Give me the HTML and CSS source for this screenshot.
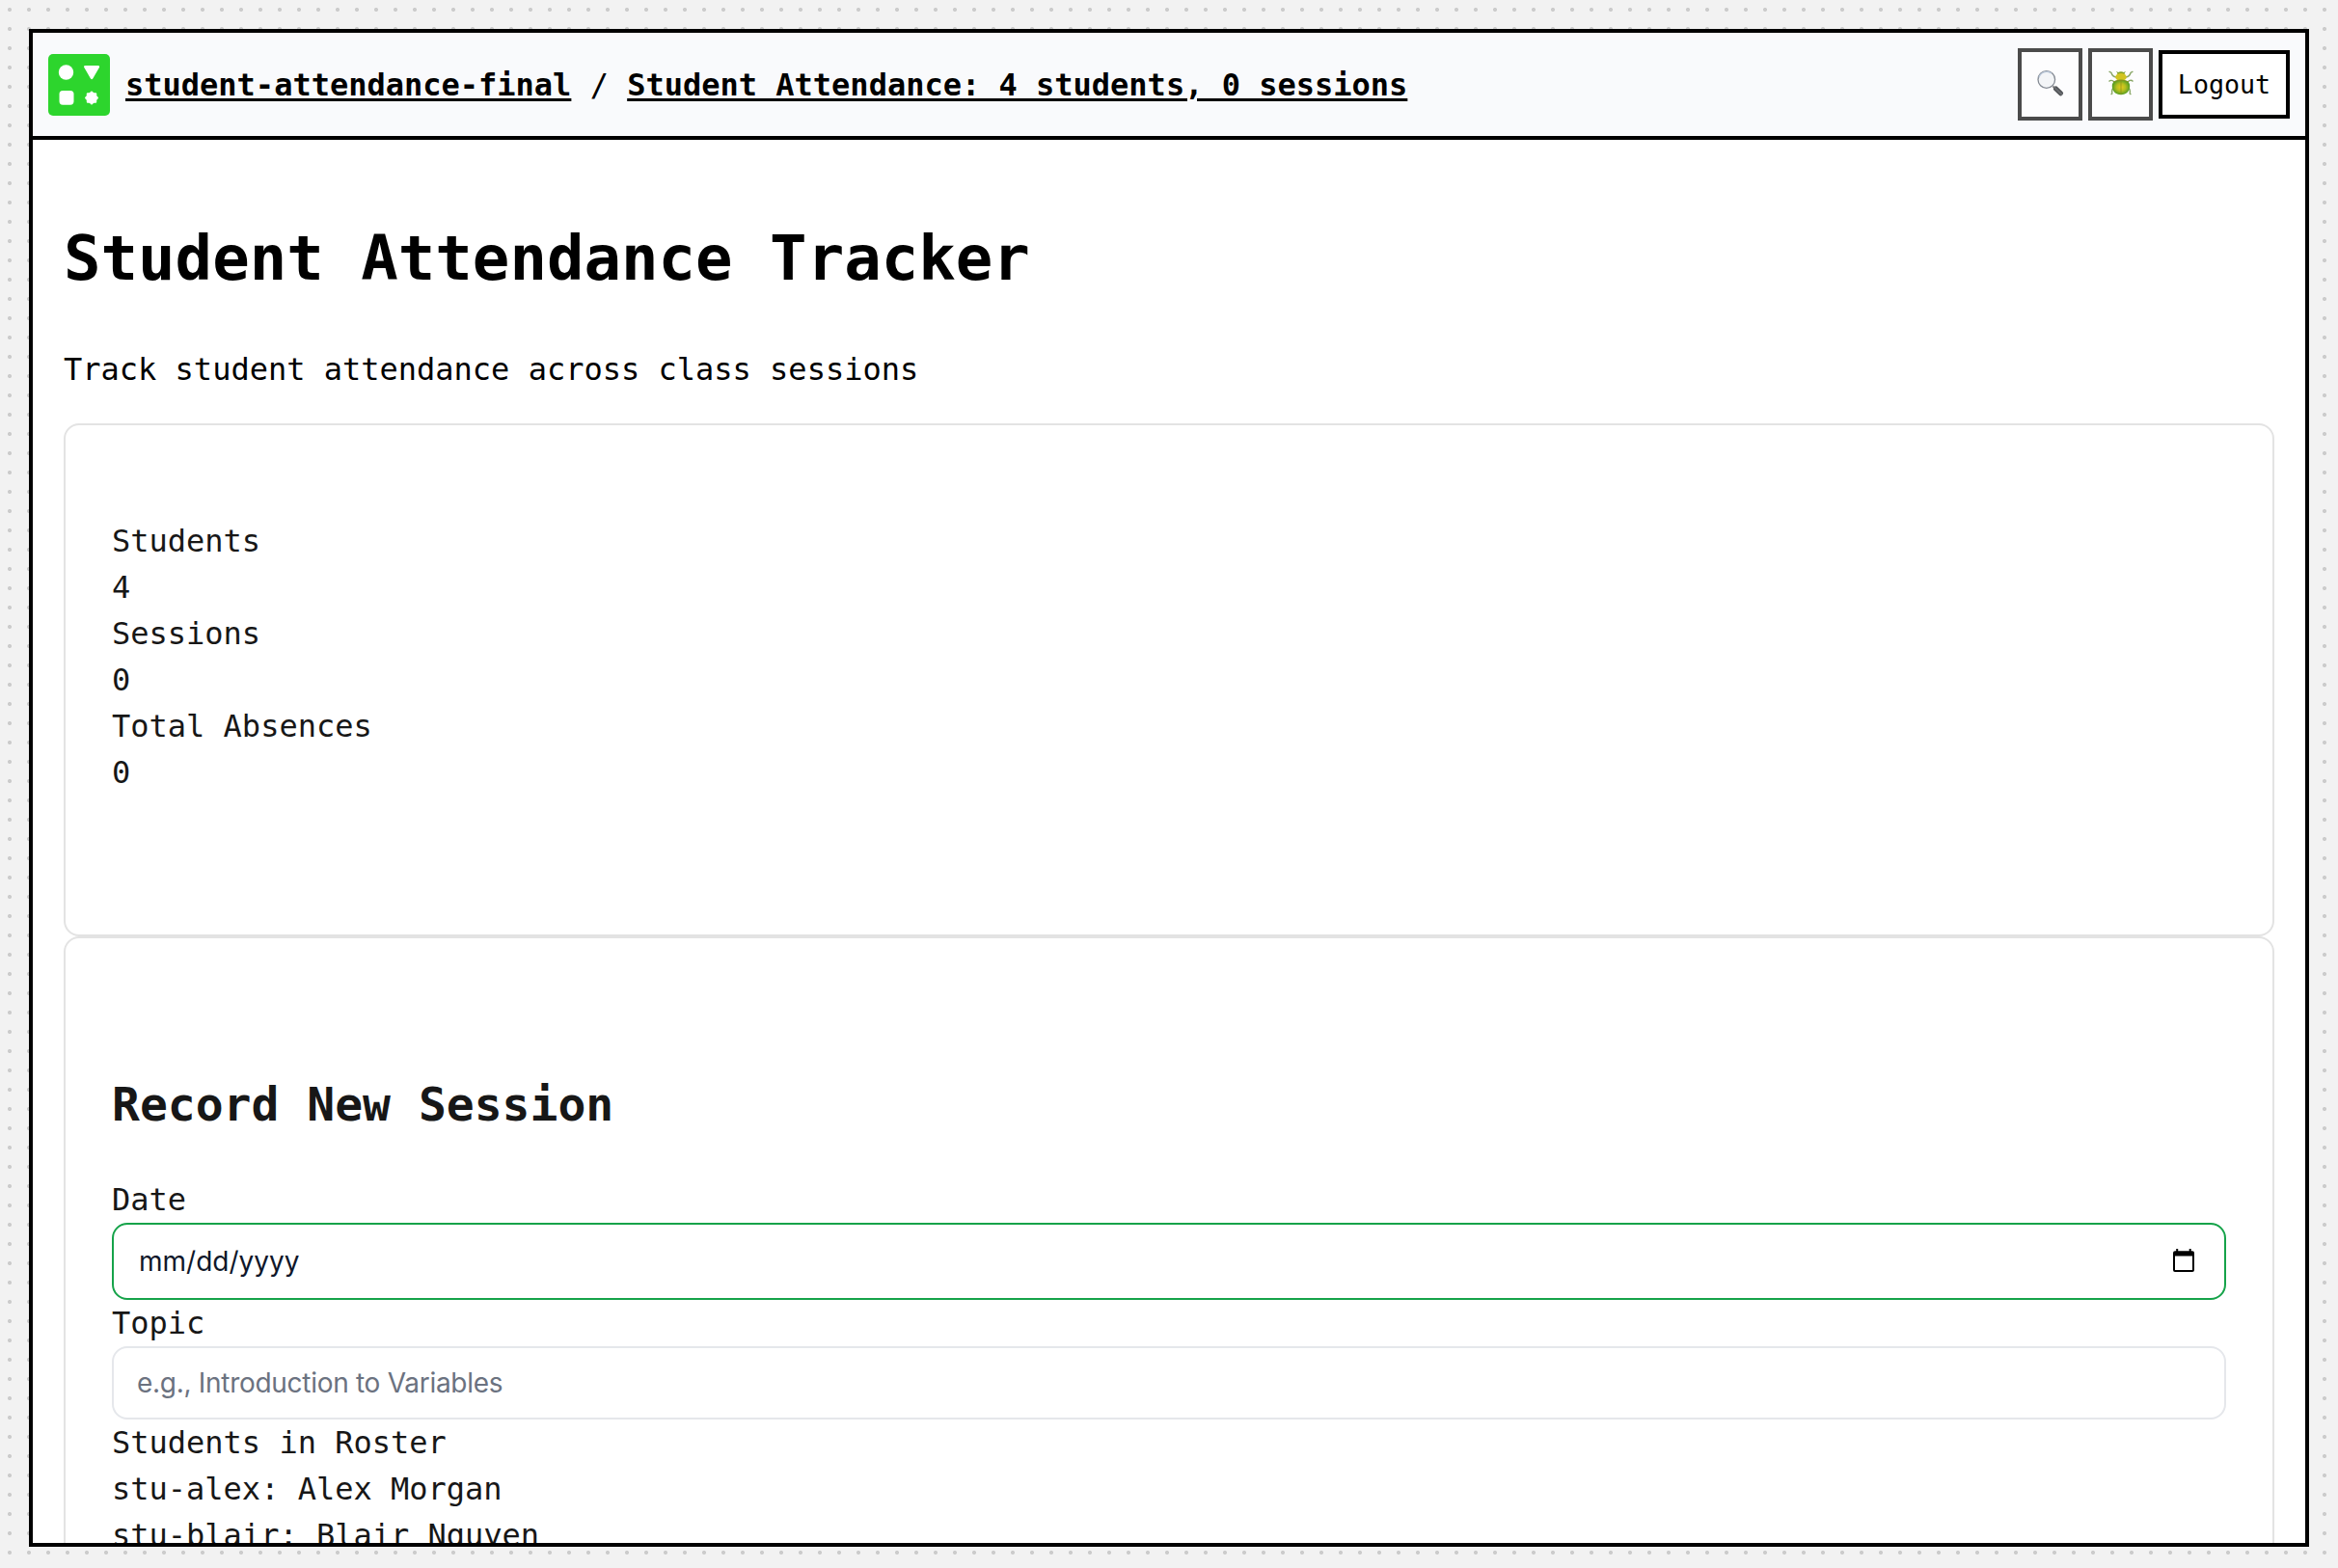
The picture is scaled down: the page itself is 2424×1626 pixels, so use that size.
FILE: index.html
```html
<!DOCTYPE html>
<html lang="en">
<head>
<meta charset="utf-8">
<title>Student Attendance Tracker</title>
<link rel="stylesheet" href="styles.css">
</head>
<body>
<div class="frame">
  <header class="topbar">
    <svg class="logo" viewBox="0 0 64 64" aria-hidden="true">
      <rect width="64" height="64" rx="5" fill="#2dd52d"/>
      <g fill="#fff">
        <circle cx="18.5" cy="19" r="7.7"/>
        <path d="M38.500 12h13.200q2 0 1.200 2l-6.500 11.200q-1.300 2-2.600 0l-6.500-11.200q-1-2 1.200-2z"/>
        <rect x="11.5" y="38" width="15" height="14.7" rx="3.6"/>
        <rect x="39.8" y="40.3" width="10.4" height="10.4" rx="1"/>
        <rect x="39.8" y="40.3" width="10.4" height="10.4" rx="1" transform="rotate(45 45 45.5)"/>
      </g>
    </svg>
    <nav class="crumbs"><a href="#">student-attendance-final</a> / <a href="#">Student Attendance: 4 students, 0 sessions</a></nav>
    <div class="actions">
      <button class="icon-button" aria-label="Search">
        <svg viewBox="0 0 28 28" width="28" height="28">
          <defs><linearGradient id="handle" x1="0" y1="1" x2="1" y2="0"><stop offset="0" stop-color="#2d2f32"/><stop offset=".5" stop-color="#707377"/><stop offset="1" stop-color="#2d2f32"/></linearGradient></defs>
          <path d="M16.500 17.500l3 3" stroke="#777" stroke-width="2"/>
          <path d="M19.500 20l5 4.800" stroke="url(#handle)" stroke-width="5" stroke-linecap="round"/>
          <circle cx="9.800" cy="10.500" r="8.800" fill="#f3f5f7" stroke="#858b94" stroke-width="1.300"/>
          <path d="M1.900 8.400a8.300 8.300 0 0 1 13-4.300" fill="none" stroke="#bac8da" stroke-width="1.200"/>
        </svg>
      </button>
      <button class="icon-button" aria-label="Debug">
        <svg viewBox="0 0 28 28" width="28" height="28">
          <defs><radialGradient id="shell"><stop offset="0" stop-color="#e8cb1d"/><stop offset=".5" stop-color="#b5bf20"/><stop offset="1" stop-color="#569d22"/></radialGradient></defs>
          <path d="M9 8Q5 7.500 4 3.500L1.600 2.200M19 8Q23 7.500 24 3.500L26.400 2.200M7 13Q4 10 1.500 12.500M21 13Q24 10 26.500 12.500M7 19Q4 20 4.800 25L3.600 26M21 19Q24 20 23.200 25L24.400 26" fill="none" stroke="#8aa767" stroke-width="1.400"/>
          <path d="M11 4l-1.300-1.800M17 4l1.300-1.800" stroke="#789a30"/>
          <ellipse cx="14" cy="5" rx="3.800" ry="2.700" fill="#84a325"/>
          <ellipse cx="14" cy="8" rx="5.800" ry="4" fill="#d2c421"/>
          <path d="M14 10.700c6.200 0 9.200 2.300 9.200 6.500 0 5-3.700 9-9.200 9s-9.200-4-9.200-9c0-4.200 3-6.500 9.200-6.500z" fill="url(#shell)"/>
          <path d="M6 12.900Q14 9.500 22 12.900M14 11v15" fill="none" stroke="#8b8f1b" stroke-width=".800"/>
        </svg>
      </button>
      <button class="logout">Logout</button>
    </div>
  </header>
  <main class="content">
    <h1 class="title">Student Attendance Tracker</h1>
    <p class="subtitle">Track student attendance across class sessions</p>
    <section class="card stats">
      <div>Students</div>
      <div>4</div>
      <div>Sessions</div>
      <div>0</div>
      <div>Total Absences</div>
      <div>0</div>
    </section>
    <section class="card session">
      <h2 class="heading">Record New Session</h2>
      <div>Date</div>
      <div class="field field-date">
        <span class="date-text">mm/dd/yyyy</span>
        <svg class="calendar" viewBox="0 0 22 24" width="22" height="24" aria-hidden="true">
          <path d="M3.200 0h2v2.300h11.500V0h2v2.300H20q2 0 2 2V22q0 2-2 2H2q-2 0-2-2V4.300q0-2 2-2h1.200zM2 7.500V22h18V7.500z" fill="#000" fill-rule="evenodd"/>
        </svg>
      </div>
      <div>Topic</div>
      <div class="field field-topic"><span class="placeholder">e.g., Introduction to Variables</span></div>
      <div>Students in Roster</div>
      <div>stu-alex: Alex Morgan</div>
      <div>stu-blair: Blair Nguyen</div>
    </section>
  </main>
</div>
</body>
</html>
```
FILE: styles.css
```css
* {
  box-sizing: border-box;
}

body {
  margin: 0;
  height: 1626px;
  padding: 30px 30px 22px;
  overflow: hidden;
  background: #f2f2f2 radial-gradient(circle at 10px 10px, #ccc 2px, transparent 2.2px) 0 0 / 20px 20px;
  font: 32px/48px "DejaVu Sans Mono", monospace;
  color: #000;
}

.frame {
  height: 1574px;
  border: 4px solid #000;
  background: #fff;
  overflow: hidden;
}

.topbar {
  display: flex;
  align-items: center;
  height: 111px;
  padding: 0 16px;
  border-bottom: 4px solid #000;
  background: #f9fafc;
}

.logo {
  width: 64px;
  height: 64px;
  margin-right: 16px;
}

.crumbs {
  flex: 1;
  white-space: nowrap;
}

.crumbs a {
  color: #000;
  font-weight: 700;
  text-decoration: underline;
  text-decoration-thickness: 3px;
  text-underline-offset: 3px;
}

.actions {
  display: flex;
  align-items: center;
  gap: 6px;
}

.icon-button {
  display: flex;
  align-items: center;
  justify-content: center;
  width: 67px;
  height: 75px;
  padding: 0 0 3px;
  border: 4px solid #4b4b4b;
  background: #fdfdfe;
}

.logout {
  width: 136px;
  height: 71px;
  padding: 0;
  border: 4px solid #000;
  background: #fff;
  color: #000;
  font: 26.67px/40px "DejaVu Sans Mono", monospace;
}

.content {
  padding: 75px 32px 0;
}

.title {
  margin: 0 0 43px;
  font-size: 64px;
  line-height: 96px;
}

.subtitle {
  margin: 0 0 32px;
}

.card {
  border: 2px solid #e3e3e3;
  border-radius: 16px;
  padding: 96px 48px 0;
  color: #171717;
}

.stats {
  height: 532px;
}

.session {
  height: 900px;
  padding-top: 136px;
}

.heading {
  margin: 0 0 39px;
  font-size: 48px;
  line-height: 72px;
}

.field {
  display: flex;
  align-items: center;
  justify-content: space-between;
  border-radius: 16px;
  background: #fff;
  font-family: Inter, sans-serif;
  font-size: 28px;
  line-height: 40px;
}

.field-date {
  height: 80px;
  padding: 0 31px 0 26px;
  border: 2px solid #16a34a;
  color: #0f172a;
}

.field-topic {
  height: 76px;
  padding: 0 24px;
  border: 2px solid #e5e7eb;
  color: #6b7280;
}

.placeholder {
  letter-spacing: -0.29px;
}

.calendar {
  margin-bottom: 2px;
}
```
